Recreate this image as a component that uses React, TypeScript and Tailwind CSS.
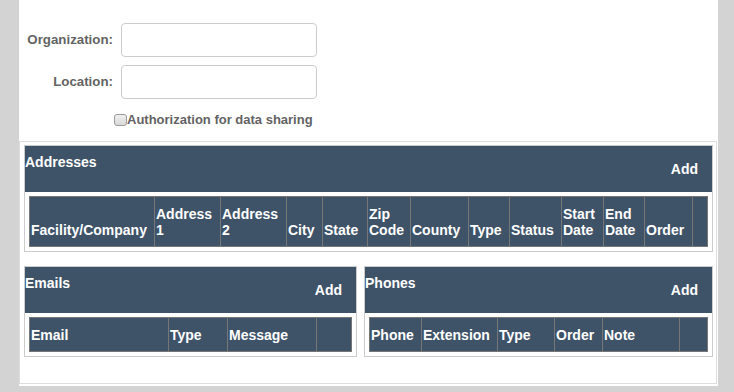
import React from "react";

const HEAD = "bg-[#3e5368]";

function Grid({ cols, labels }: { cols: string; labels: string[] }) {
  return (
    <div className={`grid ${cols} border border-[#777] ${HEAD}`}>
      {labels.map((l, i) => (
        <div
          key={i}
          className={`flex items-end pl-[1px] pt-[9px] pb-[8px] text-white font-bold text-[14px] leading-[16px] ${i > 0 ? "border-l border-[#777]" : ""}`}
        >
          <span className="whitespace-pre-line">{l}</span>
        </div>
      ))}
    </div>
  );
}

function Section({
  title,
  width,
  cols,
  labels,
}: {
  title: string;
  width: string;
  cols: string;
  labels: string[];
}) {
  return (
    <div className={`${width} border border-[#ccc] pb-[4px]`}>
      <div className={`${HEAD} h-[46px] flex justify-between items-start text-white font-bold text-[14px] leading-[16px]`}>
        <span className="mt-[8px]">{title}</span>
        <span className="mt-[15px] pr-[14px]">Add</span>
      </div>
      <div className="px-[4px] pt-[4px]">
        <Grid cols={cols} labels={labels} />
      </div>
    </div>
  );
}

export default function App() {
  return (
    <div
      className="w-[734px] h-[392px] bg-[#d3d3d3] pl-[19px] overflow-hidden"
      style={{ fontFamily: '"Liberation Sans", Arial, sans-serif' }}
    >
      <div className="w-[699px] h-[386px] bg-white flex flex-col">
        <div className="pt-[23px] flex flex-col gap-[8px]">
          {["Organization:", "Location:"].map((l) => (
            <div key={l} className="flex items-center">
              <div className="w-[94px] text-right text-[13.3px] font-bold text-[#636363]">{l}</div>
              <div className="ml-[8px] w-[196px] h-[34px] border border-[#ccc] rounded-[4px] bg-white" />
            </div>
          ))}
        </div>
        <div className="flex items-center mt-[13px] ml-[95px] h-[15px]">
          <span className="w-[13px] h-[12px] rounded-[3px] border border-[#9a9a9a] bg-gradient-to-b from-[#f0f0f0] to-[#d8d8d8]" />
          <span className="text-[13px] font-bold text-[#636363] leading-[15px]">Authorization for data sharing</span>
        </div>
        <div className="mt-[14px] w-[698px] h-[243px] border border-[#ddd] pl-[4px] pt-[3px] flex flex-col">
          <Section
            title="Addresses"
            width="w-[689px]"
            cols="grid-cols-[124px_66px_66px_36px_45px_43px_58px_41px_52px_42px_41px_48px_15px]"
            labels={[
              "Facility/Company",
              "Address\n1",
              "Address\n2",
              "City",
              "State",
              "Zip\nCode",
              "County",
              "Type",
              "Status",
              "Start\nDate",
              "End\nDate",
              "Order",
              "",
            ]}
          />
          <div className="mt-[14px] flex gap-[7px] items-start">
            <Section
              title="Emails"
              width="w-[333px]"
              cols="grid-cols-[138px_59px_89px_35px]"
              labels={["Email", "Type", "Message", ""]}
            />
            <Section
              title="Phones"
              width="w-[349px]"
              cols="grid-cols-[51px_76px_57px_48px_77px_28px]"
              labels={["Phone", "Extension", "Type", "Order", "Note", ""]}
            />
          </div>
        </div>
      </div>
    </div>
  );
}
